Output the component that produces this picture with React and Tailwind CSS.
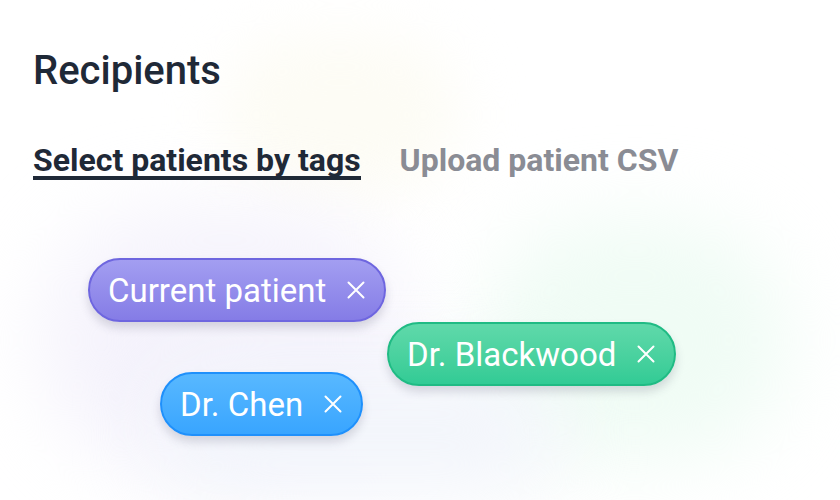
import React from "react";

const tags = [
  {
    label: "Current patient",
    pos: "left-[88px] top-[258px]",
    tone: "bg-gradient-to-b from-[#a39ef1] to-[#857ce6] border-[#6e66df]",
  },
  {
    label: "Dr. Blackwood",
    pos: "left-[387px] top-[322px]",
    tone: "bg-gradient-to-b from-[#5fd9aa] to-[#31cb95] border-[#20bb84]",
  },
  {
    label: "Dr. Chen",
    pos: "left-[160px] top-[372px]",
    tone: "bg-gradient-to-b from-[#58b8ff] to-[#38a5ff] border-[#1f90fb]",
  },
];

const CloseIcon = () => (
  <svg width="18" height="18" viewBox="0 0 18 18" fill="none">
    <path d="M1.5 1.5L16.5 16.5M16.5 1.5L1.5 16.5" stroke="white" strokeWidth="2" strokeLinecap="round" />
  </svg>
);

const Tag = ({ label, pos, tone }) => (
  <div
    className={`absolute ${pos} ${tone} flex items-center gap-[21px] h-[64px] pl-[18px] pr-[19px] rounded-full border-2 shadow-[0_6px_10px_rgba(60,60,90,0.18)]`}
  >
    <span className="text-[33px] text-white leading-none">{label}</span>
    <CloseIcon />
  </div>
);

export default function App() {
  return (
    <div
      className="relative w-[840px] h-[500px] overflow-hidden bg-white"
      style={{ fontFamily: "Roboto, 'Liberation Sans', sans-serif" }}
    >
      {/* soft background blobs */}
      <div className="absolute left-[220px] top-[35px] w-[240px] h-[160px] rounded-full bg-[#fdfcf5] blur-[30px]" />
      <div className="absolute left-[40px] top-[210px] w-[370px] h-[260px] rounded-full bg-[#f5f3fc] blur-[40px]" />
      <div className="absolute left-[480px] top-[220px] w-[310px] h-[240px] rounded-full bg-[#f0fcf5] blur-[40px]" />
      <div className="absolute left-[160px] top-[370px] w-[400px] h-[120px] rounded-full bg-[#f2f5fb] blur-[40px]" />

      <div className="relative px-[33px] pt-[45px]">
        <h1 className="text-[40px] font-medium text-[#1f2937] leading-[52px]">Recipients</h1>
        <div className="flex gap-[39px] mt-[47px]">
          <div className="border-b-[4px] border-[#1f2937]">
            <span className="block text-[32px] font-bold text-[#1f2937] leading-[32px]">
              Select patients by tags
            </span>
          </div>
          <span className="text-[32px] font-bold text-[#8a8c94] leading-[32px]">
            Upload patient CSV
          </span>
        </div>
      </div>

      {tags.map((t) => (
        <Tag key={t.label} {...t} />
      ))}
    </div>
  );
}
